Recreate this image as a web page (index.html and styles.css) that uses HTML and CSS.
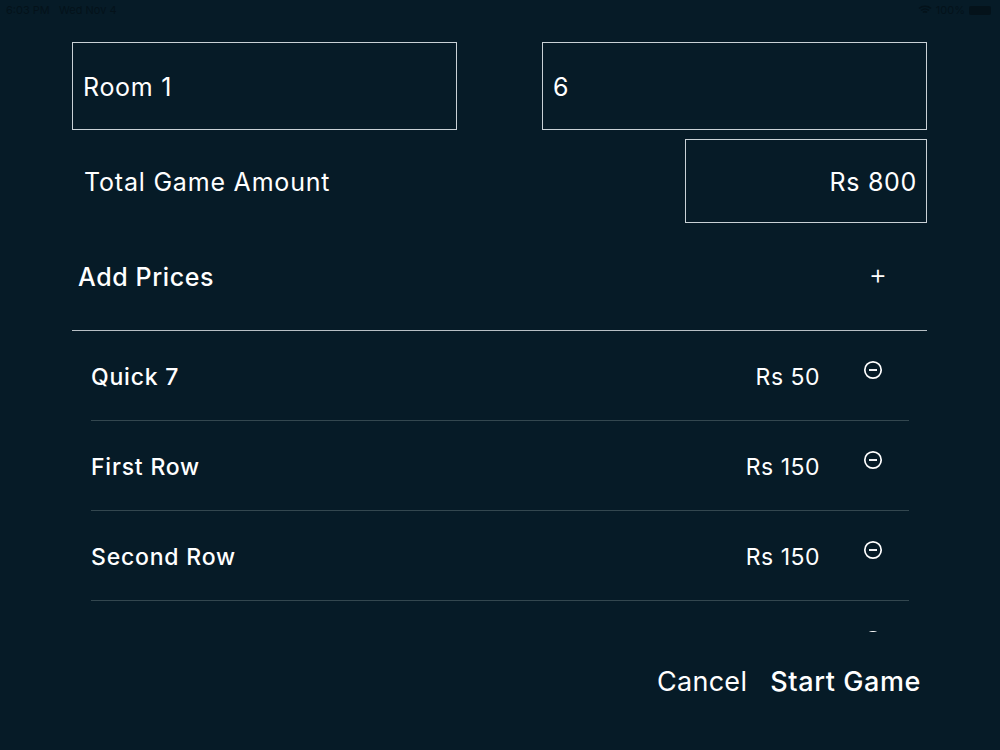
FILE: index.html
```html
<!DOCTYPE html>
<html>
<head>
<meta charset="utf-8">
<link rel="stylesheet" href="styles.css">
</head>
<body>
<div class="status">
  <div class="status-left">6:03 PM&nbsp;&nbsp;&nbsp;Wed Nov 4</div>
  <div class="status-right">
    <svg width="14" height="10" viewBox="0 0 14 10"><path d="M1 3.5a9 9 0 0 1 12 0M3 5.5a6 6 0 0 1 8 0M5 7.5a3 3 0 0 1 4 0" fill="none" stroke="#04121a" stroke-width="1.6"/></svg>
    <span>100%</span>
    <span class="battery"></span>
  </div>
</div>
<main class="page">
  <div class="fields">
    <div class="box">Room 1</div>
    <div class="box">6</div>
  </div>
  <div class="total">
    <div class="total-label">Total Game Amount</div>
    <div class="box box-right">Rs 800</div>
  </div>
  <div class="add-row">
    <div class="add-label">Add Prices</div>
    <div class="plus">+</div>
  </div>
  <div class="list">
    <div class="item"><span class="name">Quick 7</span><span class="price">Rs 50</span><span class="icon"><svg width="20" height="20" viewBox="0 0 20 20"><circle cx="10" cy="10" r="8.2" fill="none" stroke="#fff" stroke-width="1.7"/><path d="M6 10h8" stroke="#fff" stroke-width="1.9"/></svg></span></div>
    <div class="item"><span class="name">First Row</span><span class="price">Rs 150</span><span class="icon"><svg width="20" height="20" viewBox="0 0 20 20"><circle cx="10" cy="10" r="8.2" fill="none" stroke="#fff" stroke-width="1.7"/><path d="M6 10h8" stroke="#fff" stroke-width="1.9"/></svg></span></div>
    <div class="item"><span class="name">Second Row</span><span class="price">Rs 150</span><span class="icon"><svg width="20" height="20" viewBox="0 0 20 20"><circle cx="10" cy="10" r="8.2" fill="none" stroke="#fff" stroke-width="1.7"/><path d="M6 10h8" stroke="#fff" stroke-width="1.9"/></svg></span></div>
    <div class="item"><span class="name"></span><span class="price"></span><span class="icon"><svg width="20" height="20" viewBox="0 0 20 20"><circle cx="10" cy="10" r="8.2" fill="none" stroke="#fff" stroke-width="1.7"/><path d="M6 10h8" stroke="#fff" stroke-width="1.9"/></svg></span></div>
  </div>
  <div class="actions">
    <span class="btn">Cancel</span>
    <span class="btn btn-strong">Start Game</span>
  </div>
</main>
</body>
</html>
```
FILE: styles.css
```css
html, body {
  margin: 0;
  padding: 0;
  background: #061b27;
  color: #ffffff;
  font-family: "Inter", "Liberation Sans", sans-serif;
}
body {
  width: 1000px;
  height: 750px;
  overflow: hidden;
}
.status {
  height: 20px;
  display: flex;
  justify-content: space-between;
  align-items: center;
  padding: 0 9px 0 6px;
  font-size: 11px;
  color: #04121a;
}
.status-right {
  display: flex;
  align-items: center;
  gap: 4px;
}
.battery {
  width: 22px;
  height: 9px;
  background: #04121a;
  border-radius: 2px;
}
.page {
  padding: 22px 73px 0 72px;
}
.fields {
  display: grid;
  grid-template-columns: 385px 385px;
  justify-content: space-between;
}
.box {
  box-sizing: border-box;
  height: 88px;
  border: 1.5px solid #c9d1d6;
  display: flex;
  align-items: center;
  padding: 1px 10px 0;
  font-size: 25px;
  letter-spacing: 0.7px;
}
.total {
  margin-top: 9px;
  display: flex;
  justify-content: space-between;
  align-items: center;
}
.total-label {
  font-size: 25px;
  letter-spacing: 0.8px;
  padding-left: 12px;
  padding-top: 2px;
}
.box-right {
  width: 242px;
  height: 84px;
  justify-content: flex-end;
  padding-right: 9px;
}
.add-row {
  height: 107px;
  display: flex;
  justify-content: space-between;
  align-items: center;
  border-bottom: 1.5px solid #b7bfc4;
}
.add-label {
  font-size: 25px;
  font-weight: 500;
  letter-spacing: 0.6px;
  padding-left: 6px;
}
.plus {
  font-size: 28px;
  font-weight: 300;
  padding-right: 40px;
  padding-bottom: 5px;
}
.list {
  height: 301px;
  overflow: hidden;
  padding: 0 18px 0 19px;
}
.item {
  height: 89px;
  border-bottom: 1px solid #33474f;
  display: flex;
  align-items: center;
}
.name {
  flex: 1;
  font-size: 23px;
  font-weight: 500;
  letter-spacing: 0.8px;
  padding-top: 2px;
}
.price {
  font-size: 23px;
  letter-spacing: 0.5px;
  padding-top: 2px;
}
.icon {
  width: 72px;
  margin-left: 17px;
  display: flex;
  justify-content: center;
  align-self: flex-start;
  padding-top: 29px;
}
.actions {
  display: flex;
  justify-content: flex-end;
  gap: 23px;
  padding-right: 6px;
  margin-top: 33px;
}
.btn {
  font-size: 27px;
  letter-spacing: 0.3px;
}
.btn-strong {
  font-weight: 500;
  letter-spacing: 0.6px;
}
```
